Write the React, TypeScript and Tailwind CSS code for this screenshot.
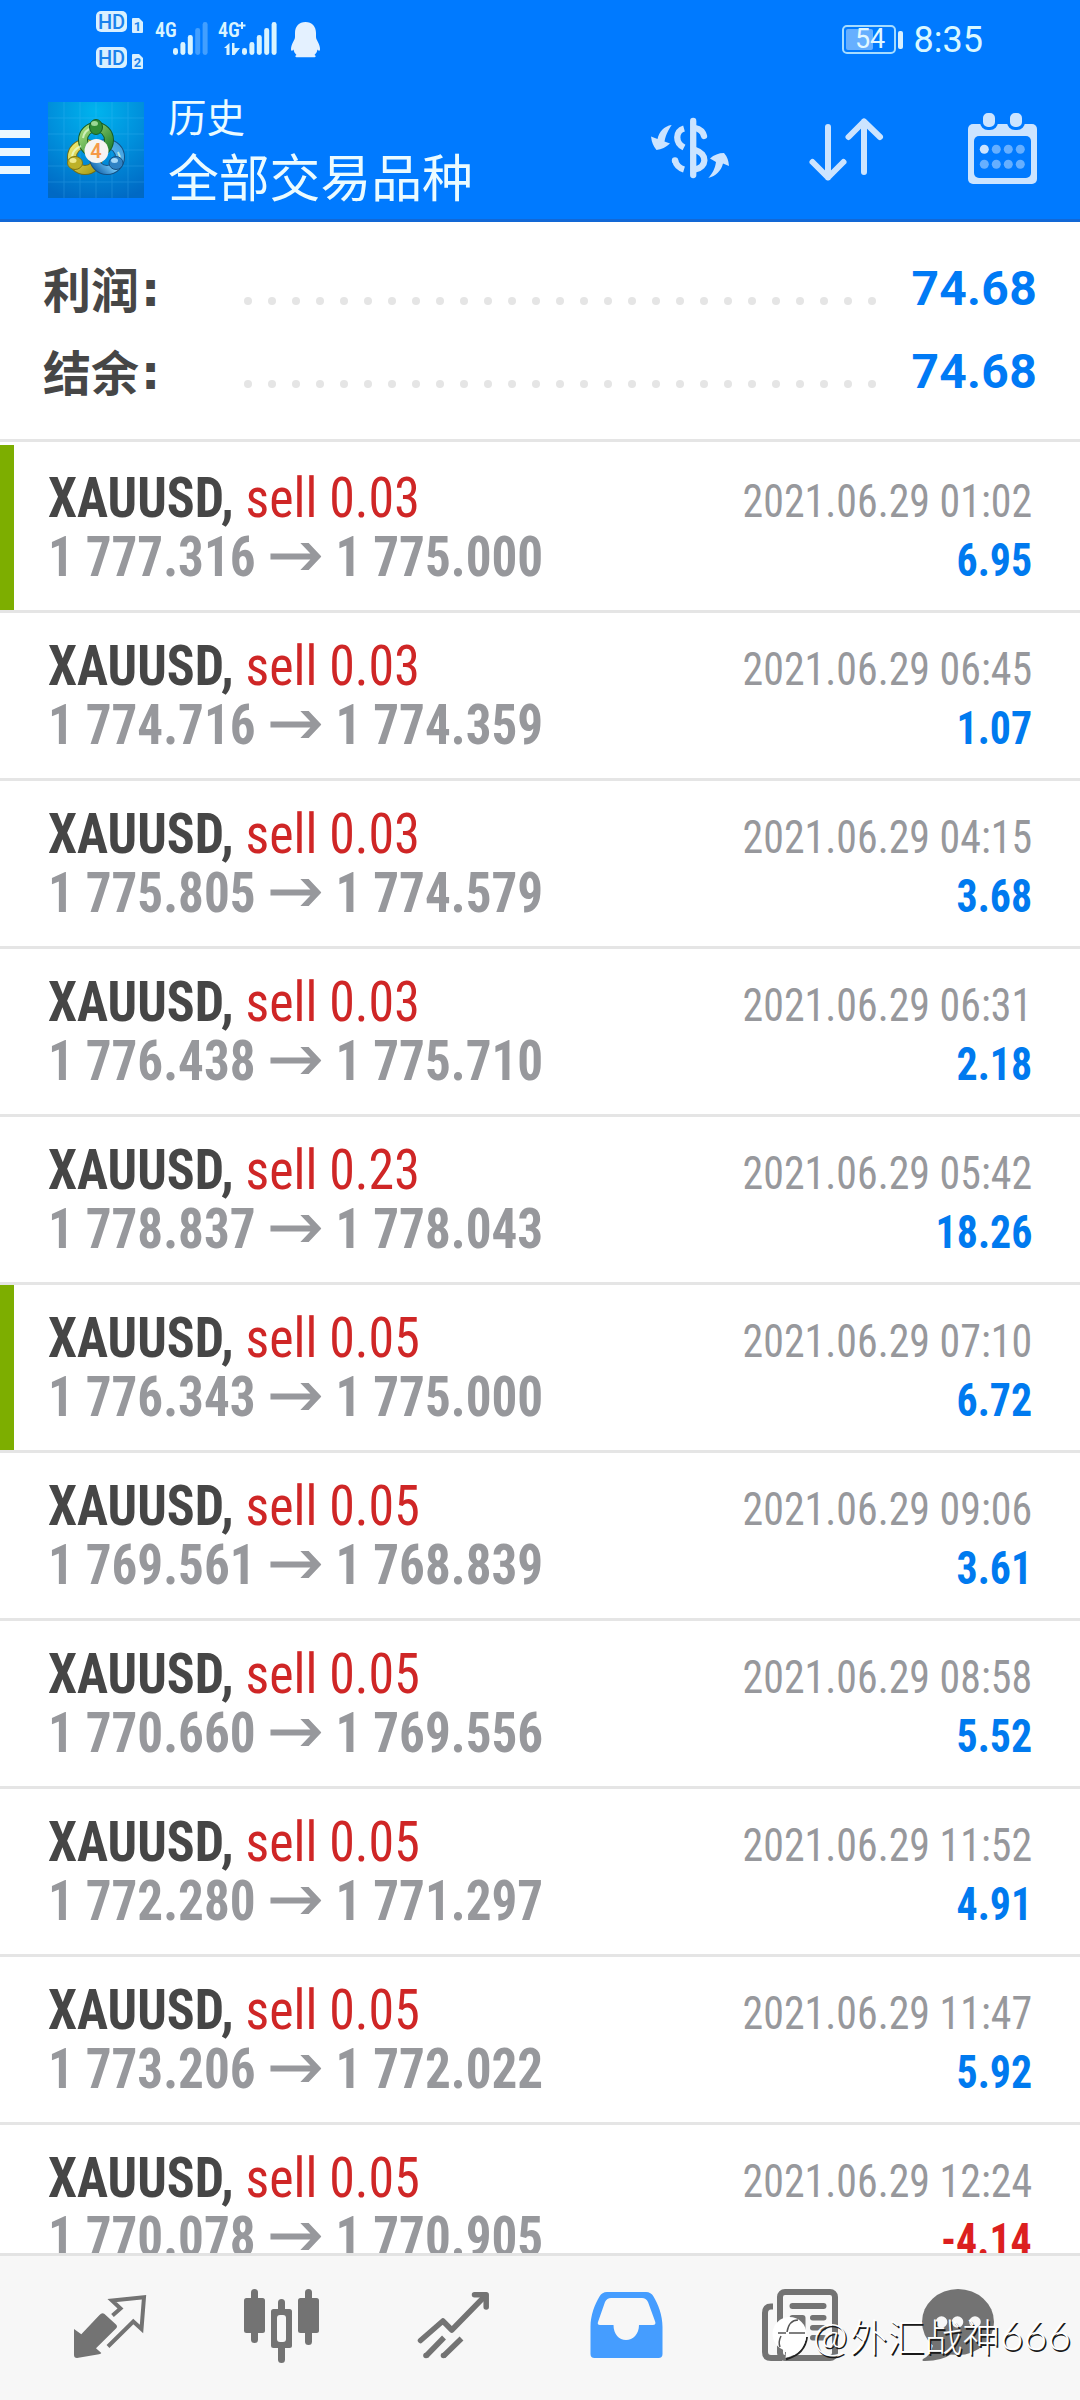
import type { ReactNode } from "react";

type Deal = {
	lot: string;
	open: string;
	close: string;
	time: string;
	profit: string;
	marked?: boolean;
};

const deals: Deal[] = [
	{ lot: "0.03", open: "1 777.316", close: "1 775.000", time: "2021.06.29 01:02", profit: "6.95", marked: true },
	{ lot: "0.03", open: "1 774.716", close: "1 774.359", time: "2021.06.29 06:45", profit: "1.07" },
	{ lot: "0.03", open: "1 775.805", close: "1 774.579", time: "2021.06.29 04:15", profit: "3.68" },
	{ lot: "0.03", open: "1 776.438", close: "1 775.710", time: "2021.06.29 06:31", profit: "2.18" },
	{ lot: "0.23", open: "1 778.837", close: "1 778.043", time: "2021.06.29 05:42", profit: "18.26" },
	{ lot: "0.05", open: "1 776.343", close: "1 775.000", time: "2021.06.29 07:10", profit: "6.72", marked: true },
	{ lot: "0.05", open: "1 769.561", close: "1 768.839", time: "2021.06.29 09:06", profit: "3.61" },
	{ lot: "0.05", open: "1 770.660", close: "1 769.556", time: "2021.06.29 08:58", profit: "5.52" },
	{ lot: "0.05", open: "1 772.280", close: "1 771.297", time: "2021.06.29 11:52", profit: "4.91" },
	{ lot: "0.05", open: "1 773.206", close: "1 772.022", time: "2021.06.29 11:47", profit: "5.92" },
	{ lot: "0.05", open: "1 770.078", close: "1 770.905", time: "2021.06.29 12:24", profit: "-4.14" },
];

const totals = [
	{ label: "利润", value: "74.68" },
	{ label: "结余", value: "74.68" },
];

/* ---------- Status bar ---------- */

function HdBadge({ sim }: { sim: string }) {
	return (
		<div className="flex h-[22px] items-end gap-[5px]">
			<span className="mb-px flex h-[21px] w-[31px] items-center justify-center rounded-[5px] bg-[#d9f0ff] font-[Roboto] text-[20px] font-medium leading-none text-[#1a82ec]">
				HD
			</span>
			<svg width="11" height="15" viewBox="0 0 11 15" className="overflow-visible">
				<path d="M1 0H7L11 4V14Q11 15 10 15H1Q0 15 0 14V1Q0 0 1 0Z" fill="#d9f0ff" />
				<text x="5.5" y="12.5" textAnchor="middle" fontFamily="Roboto" fontWeight="700" fontSize="13" fill="#1a82ec">
					{sim}
				</text>
			</svg>
		</div>
	);
}

function Signal({ x, dim }: { x: number; dim?: boolean }) {
	const tops = [26, 20, 13, 6, 0];
	return (
		<g fill="#d9f4ff">
			{tops.map((top, i) => (
				<rect
					key={top}
					x={x + i * 7.4}
					y={top}
					width="5"
					height={33 - top}
					rx="2.4"
					opacity={dim && i > 2 ? 0.3 : 1}
				/>
			))}
		</g>
	);
}

function StatusBar() {
	return (
		<div className="flex h-[76px] items-start justify-between pl-24 pr-[97px]">
			<div className="flex">
				<div className="flex flex-col gap-[14px] pt-[11px]">
					<HdBadge sim="1" />
					<HdBadge sim="2" />
				</div>
				<svg width="54" height="36" viewBox="0 0 54 36" className="ml-3 mt-[22px] overflow-visible">
					<text x="0" y="14.5" fontFamily="Roboto Condensed" fontWeight="600" fontSize="20" fill="#d9f4ff">
						4G
					</text>
					<Signal x={18} dim />
				</svg>
				<svg width="60" height="36" viewBox="0 0 60 36" className="ml-[9px] mt-[22px] overflow-visible">
					<text x="0" y="14.5" fontFamily="Roboto Condensed" fontWeight="600" fontSize="20" fill="#d9f4ff">
						4G
					</text>
					<path d="M20.5 3.5H27.500M24 0V7" stroke="#d9f4ff" strokeWidth="2" />
					<path d="M6 26L11.5 21V33H8.5V26ZM14 21H16.5V26H22L16.5 33H14Z" fill="#d9f4ff" />
					<Signal x={24} />
				</svg>
				<svg width="29" height="36" viewBox="0 0 29 36" className="ml-[13px] mt-[22px]">
					<path
						d="M14.5 0C21 0 25 4.500 25 11V15C25 18 29 22 29 27C29 29 28 29.500 26.500 27.500C26 30 25 31.500 23.500 33C25 33.500 25 35.300 23.500 35.300H5.500C4 35.300 4 33.500 5.500 33C4 31.500 3 30 2.500 27.500C1 29.500 0 29 0 27C0 22 4 18 4 15V11C4 4.500 8 0 14.500 0Z"
						fill="#e4f1ff"
					/>
				</svg>
			</div>
			<div className="mt-[25px] flex h-[29px] items-center">
				<div className="relative flex h-[29px] w-[54px] items-center rounded-[5px] border-2 border-[#a6dcff] p-[2px]">
					<div className="h-full w-[27px] rounded-[2px] bg-[#66afff]" />
					<span className="absolute inset-0 flex items-center justify-center pl-[3px] font-[Roboto] text-[27px] leading-none text-[#e2f8ff]">
						54
					</span>
				</div>
				<div className="ml-[2px] h-[18px] w-[5px] rounded-[2px] bg-[#d9f0ff]" />
				<span className="ml-[11px] font-[Roboto] text-[36px] leading-none text-[#d9f8ff]">8:35</span>
			</div>
		</div>
	);
}

/* ---------- Toolbar ---------- */

function AppLogo() {
	return (
		<svg width="96" height="96" viewBox="0 0 96 96">
			<defs>
				<radialGradient id="sky" cx="0.5" cy="0.1" r="0.95">
					<stop offset="0" stopColor="#00b4ee" />
					<stop offset="0.5" stopColor="#0090dc" />
					<stop offset="1" stopColor="#0069c4" />
				</radialGradient>
				<linearGradient id="green" x1="0" y1="0" x2="1" y2="1">
					<stop offset="0" stopColor="#a5dc7a" />
					<stop offset="1" stopColor="#1c7d2c" />
				</linearGradient>
				<linearGradient id="yellow" x1="0" y1="0" x2="1" y2="1">
					<stop offset="0" stopColor="#f0ea70" />
					<stop offset="1" stopColor="#a89c14" />
				</linearGradient>
				<linearGradient id="blue" x1="1" y1="0" x2="0" y2="1">
					<stop offset="0" stopColor="#3d9fe0" />
					<stop offset="0.6" stopColor="#6cc0f2" />
					<stop offset="1" stopColor="#1264ac" />
				</linearGradient>
			</defs>
			<rect width="96" height="96" fill="url(#sky)" />
			<path
				d="M16 0V96M32 0V96M48 0V96M64 0V96M80 0V96M0 16H96M0 32H96M0 48H96M0 64H96M0 80H96"
				stroke="#5cc6ff"
				strokeWidth="1"
				opacity="0.22"
			/>
			<g fill="none">
				<circle cx="37" cy="55" r="13" stroke="#6f6d18" strokeWidth="10" />
				<circle cx="37" cy="55" r="13" stroke="url(#yellow)" strokeWidth="8" />
				<circle cx="59" cy="55" r="13" stroke="#155083" strokeWidth="10" />
				<circle cx="59" cy="55" r="13" stroke="url(#blue)" strokeWidth="8" />
				<circle cx="48" cy="38" r="13" stroke="#155c24" strokeWidth="10" />
				<circle cx="48" cy="38" r="13" stroke="url(#green)" strokeWidth="8" />
				<path d="M35 36C36 30 40 27 44 26M24 54C25 49 28 46 33 44M70 50C73 55 72 61 68 64" stroke="#e9ffd8" strokeWidth="2" opacity="0.7" />
			</g>
			<ellipse cx="48" cy="25" rx="6.500" ry="7.500" fill="#2f8d35" stroke="#155c24" />
			<ellipse cx="46.500" cy="21.500" rx="3.500" ry="2.500" fill="#9bd894" />
			<ellipse cx="27" cy="61" rx="7.500" ry="6.500" fill="#bdb128" stroke="#7d7414" />
			<ellipse cx="25" cy="58.500" rx="3.500" ry="2.500" fill="#efe98c" />
			<ellipse cx="68" cy="61" rx="7" ry="6.500" fill="#2f82c4" stroke="#155083" />
			<ellipse cx="66.500" cy="58.500" rx="3.500" ry="2.500" fill="#a5d8f8" />
			<circle cx="48.500" cy="49" r="12" fill="#f5f3f2" />
			<text x="48" y="56" textAnchor="middle" fontFamily="Roboto" fontWeight="600" fontSize="20" fill="#f59a48">
				4
			</text>
		</svg>
	);
}

function CurrencyIcon() {
	return (
		<svg width="80" height="72" viewBox="0 0 80 72" fill="none" stroke="#cce4ff" strokeWidth="6.300">
			<path d="M43.200 9V63" strokeLinecap="round" />
			<path d="M34 16.500C25 19 25 31 34 35.500" />
			<path d="M25 48C26 53 29 56 34 57.500" />
			<circle cx="25" cy="48.500" r="3.200" fill="#cce4ff" stroke="none" />
			<path d="M45 16C50 17 53 20 54 24" strokeLinecap="round" />
			<path d="M45 38C58 42 57 55 45 57.500" />
			<g fill="#cce4ff" stroke="none">
				<path d="M21.700 13C14 14 9 20 7.500 27L1 24.500Q2 33 6.500 38Q14 37 20 31.500L14.500 29.500C16 22 19 17 21.700 13Z" />
				<path d="M58.300 66C66 64 71 59 73 51.500L79 54Q78.500 46 74 41Q66 41 60 46.500L66 50C65 57 62 62 58.300 66Z" />
			</g>
		</svg>
	);
}

function SortIcon() {
	return (
		<svg
			width="76"
			height="72"
			viewBox="0 0 76 72"
			fill="none"
			stroke="#cce4ff"
			strokeWidth="6"
			strokeLinecap="round"
			strokeLinejoin="round"
		>
			<path d="M20 15V65.500M4.500 50L20 65.500L35.500 50" />
			<path d="M56 60V9.500M40.500 25L56 9.500L72 25" />
		</svg>
	);
}

function CalendarIcon() {
	return (
		<svg width="73" height="76" viewBox="0 0 73 76">
			<rect x="2" y="14" width="69" height="60" rx="5" fill="#cce4ff" />
			<rect x="8" y="26" width="57" height="42" rx="5" fill="#007aff" />
			<rect x="15.500" y="1.500" width="15" height="17" rx="6.500" fill="#cce4ff" stroke="#007aff" strokeWidth="3" />
			<rect x="42.500" y="1.500" width="15" height="17" rx="6.500" fill="#cce4ff" stroke="#007aff" strokeWidth="3" />
			{[39.3, 54.3].map((cy, row) =>
				[18.3, 30.3, 42.3, 54.3].map((cx, col) => (
					<circle key={`${cx}-${cy}`} cx={cx} cy={cy} r="4.500" fill={row + col === 0 ? "#cce4ff" : "#66afff"} />
				)),
			)}
		</svg>
	);
}

function Toolbar() {
	return (
		<div className="flex h-[143px] items-start">
			<div className="mt-[54px] flex w-[30px] flex-col gap-[10px]">
				<div className="h-2 bg-[#ebf8ff]" />
				<div className="h-2 bg-[#ebf8ff]" />
				<div className="h-2 bg-[#ebf8ff]" />
			</div>
			<div className="ml-[18px] mt-[26px]">
				<AppLogo />
			</div>
			<div className="ml-6 mt-[17px] whitespace-nowrap font-['Noto_Sans_CJK_SC',sans-serif] text-[#ebfbff]">
				<div className="text-[38.500px] leading-[44px]">历史</div>
				<div className="mt-[8px] text-[50.800px] leading-[60px]">全部交易品种</div>
			</div>
			<div className="ml-auto mr-[41px] mt-[34px] flex items-start">
				<div className="mt-[2px]">
					<CurrencyIcon />
				</div>
				<div className="ml-[78px] mt-[2px]">
					<SortIcon />
				</div>
				<div className="ml-[82px]">
					<CalendarIcon />
				</div>
			</div>
		</div>
	);
}

/* ---------- Totals ---------- */

function Totals() {
	return (
		<section className="h-[217px] pt-[24px]">
			{totals.map((t) => (
				<div key={t.label} className="flex h-[83px] items-center px-[43px]">
					<span className="flex w-[201px] items-center whitespace-nowrap font-['Noto_Sans_CJK_SC',sans-serif] text-[48px] font-bold leading-[83px] text-[#464646]">
						{t.label}
						<span className="ml-[2px] mt-[4px] font-['DejaVu_Sans',sans-serif]">:</span>
					</span>
					<div className="mt-[27px] flex w-[632px] justify-between">
						{Array.from({ length: 27 }, (_, i) => (
							<span key={i} className="h-2 w-2 rounded-full bg-[#e5e5e5]" />
						))}
					</div>
					<span className="ml-auto mt-[3px] font-[Roboto] text-[48px] font-bold leading-[80px] tracking-[0.300px] text-[#007af5]">
						{t.value}
					</span>
				</div>
			))}
		</section>
	);
}

/* ---------- Deal list ---------- */

function Arrow() {
	return (
		<svg
			width="55"
			height="27"
			viewBox="0 0 51 27"
			preserveAspectRatio="none"
			fill="#97989c"
			className="mb-[2px] ml-[16px] mr-[15px]"
		>
			<path d="M30 0H38.300L51 13.500L38.300 27H30L40 16.500H0V10.500H40Z" />
		</svg>
	);
}

function DealRow({ deal }: { deal: Deal }) {
	const loss = deal.profit.startsWith("-");
	return (
		<li className="flex h-[168px] shrink-0 border-b-[3px] border-[#e5e5e5]">
			<div className={deal.marked ? "w-[14px] bg-[#7dae00]" : "w-[14px]"} />
			<div className="flex-1 whitespace-nowrap pl-[34px] pr-[48px] pt-6 font-['Roboto_Condensed',sans-serif] leading-[59px]">
				<div className="flex h-[59px] items-baseline justify-between">
					<p className="origin-left scale-x-[0.943] text-[55px]">
						<span className="font-bold text-[#464646]">XAUUSD,</span>
						<span className="text-[#cf2626]"> sell {deal.lot}</span>
					</p>
					<span className="origin-right scale-x-[0.91] text-[46px] text-[#97989c]">{deal.time}</span>
				</div>
				<div className="flex h-[59px] items-baseline justify-between">
					<p className="flex origin-left scale-x-[0.93] items-center text-[55px] font-bold text-[#97989c]">
						<span>{deal.open}</span>
						<Arrow />
						<span>{deal.close}</span>
					</p>
					<span
						className={
							loss
								? "origin-right scale-x-[0.91] text-[46px] font-bold text-[#dc1f1f]"
								: "origin-right scale-x-[0.91] text-[46px] font-bold text-[#007aef]"
						}
					>
						{deal.profit}
					</span>
				</div>
			</div>
		</li>
	);
}

/* ---------- Bottom navigation ---------- */

function NavIcon({ children }: { children: ReactNode }) {
	return (
		<svg width="80" height="80" viewBox="0 0 80 80" fill="none" className="mt-[29px]">
			{children}
		</svg>
	);
}

function BottomNav() {
	return (
		<nav className="relative h-[147px] shrink-0 border-t-[3px] border-[#e3e3e3] bg-[#f7f7f7]">
			<div className="flex gap-[92px] pl-[70px]">
				<NavIcon>
					<path
						d="M4 44L11.300 49.300L29.500 30Q32 27 34.500 29L46 39.500Q48 41.500 46 43.500L26 63.300L31.300 68Q31 69 29 69.200L7 73Q4 73 4 70Z"
						fill="#737373"
					/>
					<path d="M42.500 30.500L50.500 23.500L42 15.500L74 12.200L71.500 44L63.300 36.500L38 61.500" stroke="#737373" strokeWidth="4" />
				</NavIcon>
				<NavIcon>
					<g fill="#737373">
						<rect x="9" y="4" width="7" height="54" rx="3.500" />
						<rect x="2" y="13" width="21" height="35" rx="2.500" />
						<rect x="36" y="14" width="7" height="64" rx="3.500" />
						<rect x="29" y="24" width="21" height="39" rx="2.500" />
						<rect x="63" y="4" width="7" height="56" rx="3.500" />
						<rect x="56" y="13" width="21" height="35" rx="2.500" />
					</g>
					<rect x="35" y="30" width="9" height="27" rx="3" fill="#f7f7f7" />
				</NavIcon>
				<NavIcon>
					<g stroke="#737373" strokeWidth="5.500" strokeLinejoin="round">
						<path d="M6.500 55.500L28.900 36L37.800 45L71.500 10.500" strokeLinecap="round" />
						<path d="M60.500 9.700H72.200V22" strokeLinecap="round" />
						<path d="M30 52.500L12 71M47.500 53.500L29.500 71" />
					</g>
					<circle cx="12" cy="70.500" r="2.800" fill="#737373" />
					<circle cx="29.500" cy="70.500" r="2.800" fill="#737373" />
				</NavIcon>
				<NavIcon>
					<path
						d="M21 7H60Q65 7 67.500 11.500C72 19 76.500 30 76.500 42V69Q76.500 73 72.500 73H8.500Q4.500 73 4.500 69V42C4.500 30 9 19 13.500 11.500Q16 7 21 7Z"
						fill="#459dff"
					/>
					<path
						d="M25 13H56Q60 13 62 17L69.300 37Q70 40 67 40H53C53 49 47 55 40 55C33 55 27.500 49 27.500 40H14Q11 40 12 37L19 17Q21 13 25 13Z"
						fill="#f7f7f7"
					/>
				</NavIcon>
				<NavIcon>
					<rect x="22" y="7" width="55" height="66" rx="5" stroke="#737373" strokeWidth="6" />
					<path d="M15 21.500H13Q7 21.500 7 28V67Q7 73 13 73H24" stroke="#737373" strokeWidth="6" />
					<g fill="#737373">
						<rect x="31.500" y="18" width="37" height="6" rx="3" />
						<rect x="31.500" y="30" width="16" height="24" rx="3" />
						<rect x="52" y="30" width="16.500" height="5.500" rx="2.700" />
						<rect x="52" y="40" width="16.500" height="5.500" rx="2.700" />
						<rect x="52" y="50" width="16.500" height="5.500" rx="2.700" />
					</g>
				</NavIcon>
				<div className="-ml-3">
					<NavIcon>
						<ellipse cx="40" cy="37" rx="36" ry="33" fill="#737373" />
						<path d="M15 60Q13 70 5 74Q3 76 7 76Q24 76 35 68Z" fill="#737373" />
						<circle cx="23.500" cy="37" r="5.800" fill="#f7f7f7" />
						<circle cx="39.500" cy="37" r="5.800" fill="#f7f7f7" />
						<circle cx="57" cy="37" r="5.800" fill="#f7f7f7" />
					</NavIcon>
				</div>
			</div>
			{/* author mark lies over the last two tabs */}
			<div className="absolute right-[9px] top-[51px] flex h-[56px] items-center whitespace-nowrap text-white [text-shadow:1.5px_1.5px_0.5px_#1a1a1a]">
				<svg width="40" height="46" viewBox="0 0 40 46" fill="none" className="-ml-1 mr-px mt-[8px] overflow-visible">
					<path d="M35 21Q33 38 15 43L14 36" stroke="#222" strokeWidth="2" />
					<circle cx="17.500" cy="18" r="17" fill="#fff" />
					<path d="M34.500 18Q33 37 13.500 42L14 30Z" fill="#fff" />
					<path d="M26 4Q17 4 15 16M6 17H14M9 20Q6 26 8 31M17 17H33" stroke="#555" strokeWidth="1.500" />
				</svg>
				<span className="font-[Lato] text-[42px] font-light leading-[56px]">@</span>
				<span className="ml-[2px] font-['Noto_Sans_CJK_SC',sans-serif] text-[37.500px] font-light leading-[56px]">
					外汇战神
				</span>
				<span className="font-[Lato] text-[41px] font-light leading-[56px]">666</span>
			</div>
		</nav>
	);
}

export default function App() {
	return (
		<main className="flex h-[2400px] w-[1080px] flex-col overflow-hidden bg-white">
			<header className="h-[222px] shrink-0 border-b-[3px] border-[#1268d6] bg-[#007aff]">
				<StatusBar />
				<Toolbar />
			</header>
			<Totals />
			<ul className="flex min-h-0 flex-1 flex-col overflow-hidden border-t-[3px] border-[#e5e5e5] pt-[3px]">
				{deals.map((deal) => (
					<DealRow key={deal.time} deal={deal} />
				))}
			</ul>
			<BottomNav />
		</main>
	);
}
